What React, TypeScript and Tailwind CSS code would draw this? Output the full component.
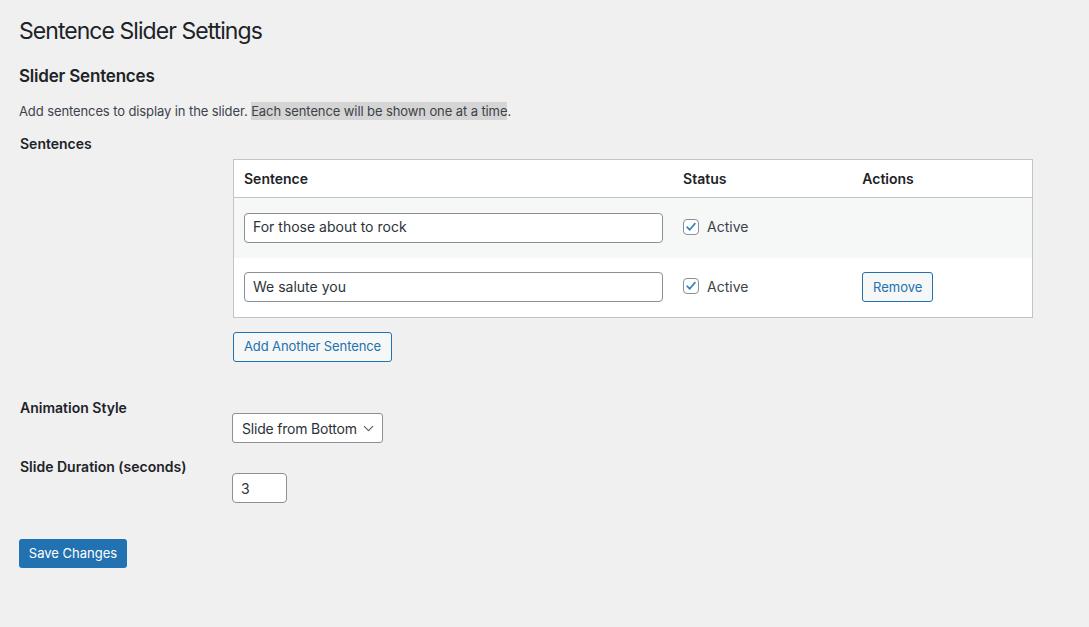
import { ChevronDown } from "lucide-react"

type Sentence = {
  id: number
  text: string
  active: boolean
}

const sentences: Sentence[] = [
  { id: 1, text: "For those about to rock", active: true },
  { id: 2, text: "We salute you", active: true },
]

function Checkbox({ checked }: { checked: boolean }) {
  return (
    <span className="w-4 h-4 rounded-[4px] border border-[#8c8f94] bg-white flex items-center justify-center shrink-0">
      {checked && (
        <svg width="14" height="14" viewBox="0 0 20 20">
          <path d="M4.5 10.2 L8.2 14 L15.6 5.2" fill="none" stroke="#3582c4" strokeWidth="2.4" strokeLinecap="round" strokeLinejoin="round" />
        </svg>
      )}
    </span>
  )
}

export default function App() {
  return (
    <div className="min-h-[627px] bg-[#f0f0f1] text-[#1d2327] font-['Inter','Liberation_Sans',sans-serif] pl-[19px] pt-[16px] pb-10">
      <h1 className="text-[23px] leading-[30px] font-normal tracking-[-0.95px]">Sentence Slider Settings</h1>

      <h2 className="mt-[19px] text-[17px] leading-[22px] font-semibold tracking-[-0.2px]">Slider Sentences</h2>

      <p className="mt-[14px] text-[13px] leading-[20px] text-[#3c434a] tracking-[-0.1px]">
        Add sentences to display in the slider.{" "}
        <span className="bg-[#d5d5d5] py-[1px]">Each sentence will be shown one at a time</span>.
      </p>

      {/* Sentences */}
      <div className="flex items-start">
        <div className="w-[213px] pt-[14px] pl-px text-[14px] leading-[18px] font-semibold">Sentences</div>
        <div className="pt-[38px] pl-px">
          <table className="w-[800px] border border-[#c3c4c7] bg-white border-collapse table-fixed">
            <thead>
              <tr className="h-[38px] border-b border-[#c3c4c7]">
                <th className="w-[439px] pl-[10px] pb-px text-left text-[14px] font-semibold">Sentence</th>
                <th className="w-[179px] pl-[10px] pb-px text-left text-[14px] font-semibold">Status</th>
                <th className="w-[180px] pl-[10px] pb-px text-left text-[14px] font-semibold">Actions</th>
              </tr>
            </thead>
            <tbody>
              {sentences.map((s, i) => (
                <tr key={s.id} className={`h-[60px] ${i % 2 === 0 ? "bg-[#f6f7f7]" : "bg-white"}`}>
                  <td className="px-[10px]">
                    <input
                      type="text"
                      defaultValue={s.text}
                      className="w-[419px] h-[30px] px-[8px] pb-[2px] bg-white border border-[#8c8f94] rounded-[4px] text-[14px] text-[#2c3338] outline-none"
                    />
                  </td>
                  <td className="pl-[10px]">
                    <label className="flex items-center gap-[8px] text-[14px] text-[#3c434a] pb-[2px]">
                      <Checkbox checked={s.active} />
                      Active
                    </label>
                  </td>
                  <td className="pl-[10px]">
                    {i > 0 && (
                      <button className="h-[30px] w-[71px] border border-[#2271b1] rounded-[3px] bg-[#f6f7f7] text-[#2271b1] text-[13px]">
                        Remove
                      </button>
                    )}
                  </td>
                </tr>
              ))}
            </tbody>
          </table>
          <button className="mt-[14px] h-[30px] w-[159px] border border-[#2271b1] rounded-[3px] bg-[#f6f7f7] text-[#2271b1] text-[13px] tracking-[-0.1px]">
            Add Another Sentence
          </button>
        </div>
      </div>

      {/* Animation Style */}
      <div className="flex items-start">
        <div className="w-[213px] pt-[37px] pl-px text-[14px] leading-[18px] font-semibold">Animation Style</div>
        <div className="pt-[51px]">
          <div className="w-[151px] h-[30px] border border-[#8c8f94] rounded-[3px] bg-white flex items-center justify-between pl-[9px] pr-[5px] text-[14px] text-[#2c3338] whitespace-nowrap">
            <span className="tracking-[-0.2px]">Slide from Bottom</span>
            <ChevronDown size={17} strokeWidth={1.5} className="text-[#50575e] shrink-0" />
          </div>
        </div>
      </div>

      {/* Slide Duration */}
      <div className="flex items-start">
        <div className="w-[213px] pt-[15px] pl-px text-[14px] leading-[18px] font-semibold">Slide Duration (seconds)</div>
        <div className="pt-[30px]">
          <input
            type="text"
            defaultValue="3"
            className="w-[55px] h-[30px] px-[8px] bg-white border border-[#8c8f94] rounded-[4px] text-[14px] text-[#2c3338] outline-none"
          />
        </div>
      </div>

      <button className="mt-[36px] h-[29px] w-[108px] rounded-[3px] bg-[#2271b1] text-white text-[13px]">
        Save Changes
      </button>
    </div>
  )
}
